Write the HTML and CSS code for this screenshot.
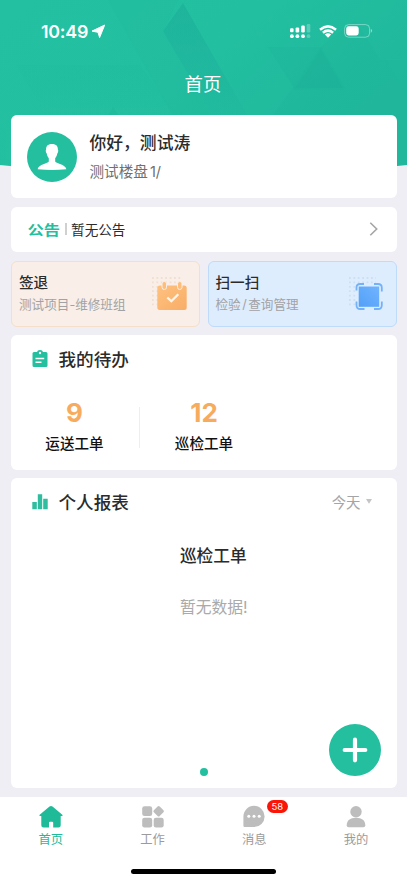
FILE: index.html
```html
<!DOCTYPE html>
<html lang="zh-CN">
<head>
<meta charset="utf-8">
<meta name="viewport" content="width=device-width, initial-scale=1">
<title>首页</title>
<link rel="stylesheet" href="styles.css">
</head>
<body>
<div class="app">
  <svg class="backdrop" viewBox="0 0 407 170" preserveAspectRatio="none" aria-hidden="true">
    <defs>
      <linearGradient id="bg" x1="0" y1="0" x2="1" y2="0.5"><stop offset="0" stop-color="#23c1a2"/><stop offset=".55" stop-color="#22bfa0"/><stop offset="1" stop-color="#20b79d"/></linearGradient>
      <linearGradient id="gem" x1="0" y1="0" x2="0" y2="1"><stop offset="0" stop-color="#1aa999" stop-opacity=".5"/><stop offset=".45" stop-color="#1aa999" stop-opacity=".36"/><stop offset="1" stop-color="#1aa999" stop-opacity=".05"/></linearGradient>
      <linearGradient id="fade" x1="0" y1="0" x2="0" y2="1"><stop offset="0" stop-color="#18a892" stop-opacity=".07"/><stop offset="1" stop-color="#18a892" stop-opacity="0"/></linearGradient>
      <clipPath id="curve"><path d="M0 0H407V165Q204 187 0 165Z"/></clipPath>
    </defs>
    <g clip-path="url(#curve)">
      <path fill="url(#bg)" d="M0 0H407V170H0Z"/>
      <path fill="#18a892" opacity=".08" d="M108 0H178L163 31L220 130H181Z"/>
      <path fill="url(#gem)" d="M183 3L250 120H215L163 31Z"/>
      <path fill="url(#fade)" d="M16 65H140L180 120H48Z"/>
      <path fill="#18a892" opacity=".14" d="M268 47H321L345 88H294Z"/>
      <path fill="#18a892" opacity=".12" d="M321 50L344 90H294Z"/>
      <path fill="#18a892" opacity=".07" d="M321 47L270 120H407V60H380L355 20Z"/>
      <path fill="#2cc9a9" opacity=".1" d="M321 59H386L407 97V59Z"/>
      <path fill="#18a892" opacity=".2" d="M108 116L113 107L119 116Z"/>
    </g>
  </svg>

  <header class="status">
    <div class="clock">10:49
      <svg width="15" height="15" viewBox="0 0 15 15"><path fill="#fff" stroke="#fff" stroke-linejoin="round" d="M13.7 1L8.6 13.6L7 8.3L1 7.1Z"/></svg>
    </div>
    <div class="signals">
      <svg width="21" height="15" viewBox="0 0 21 15"><g fill="#fff"><rect x="0" y="4.3" width="3.6" height="4" rx="1.2"/><rect x="5.6" y="3.4" width="3.6" height="5" rx="1.2"/><rect x="11.2" y="1.6" width="3.6" height="6.8" rx="1.2"/><circle cx="1.9" cy="12.2" r="1.9"/><circle cx="7.4" cy="12.2" r="1.9"/><circle cx="13" cy="12.2" r="1.9"/><g opacity=".25"><rect x="16.7" y="0" width="3.6" height="8.4" rx="1.2"/><circle cx="18.5" cy="12.2" r="1.9"/></g></g></svg>
      <svg width="18" height="13" viewBox="0 0 18 13"><g fill="none" stroke="#fff" stroke-width="2.5"><path d="M1 4.7Q9-2 17 4.7"/><path d="M3.9 7.8Q9 3.5 14.1 7.8"/></g><path fill="#fff" d="M5.8 9.6Q9 7.1 12.2 9.6L9 12.8Z"/></svg>
      <svg width="29" height="14" viewBox="0 0 29 14"><rect x=".6" y=".6" width="25" height="12.6" rx="4" fill="none" stroke="#fff" stroke-opacity=".4"/><rect x="2.2" y="2.3" width="12.5" height="9.2" rx="2.4" fill="#fff"/><path fill="#fff" opacity=".5" d="M26.8 4.8Q29.4 6.8 26.8 9Z"/></svg>
    </div>
  </header>
  <h1 class="title">首页</h1>

  <main class="content">
    <section class="card profile">
      <svg width="50" height="50" viewBox="0 0 50 50"><circle cx="25" cy="25" r="25" fill="#23bf9f"/><path fill="#fff" d="M25 12C29.4 12 31.1 14.4 30.9 17.8C31.6 18.2 31.2 20.5 30.4 21.2C30 24 28.7 25.4 28.2 26.3V29.5C28.7 31.5 38.5 32.2 39.4 37.2Q25 38.6 10.6 37.2C11.5 32.2 21.3 31.5 21.8 29.5V26.3C21.3 25.4 20 24 19.6 21.2C18.8 20.5 18.4 18.2 19.1 17.8C18.9 14.4 20.6 12 25 12Z"/></svg>
      <div>
        <h2 class="hello">你好，测试涛</h2>
        <p class="place">测试楼盘<span>1/</span></p>
      </div>
    </section>

    <section class="card notice">
      <strong>公告</strong><i></i><span>暂无公告</span>
      <svg width="9" height="14" viewBox="0 0 9 14"><path d="M1.3 .8L7.7 7L1.3 13.2" fill="none" stroke="#a5a5a5" stroke-width="1.6"/></svg>
    </section>

    <section class="actions">
      <div class="tile tile-out">
        <div><h3>签退</h3><p>测试项目-维修班组</p></div>
        <svg width="36" height="36" viewBox="0 0 36 36">
          <defs><linearGradient id="orange" x1="0" y1="0" x2="1" y2="1"><stop stop-color="#ffc17f"/><stop offset="1" stop-color="#f8ad68"/></linearGradient></defs>
          <path d="M1 2H30M1 6.4H30M1 10.8H8M1 15.2H8M1 19.6H8M1 24H8M1 28.4H8" stroke="#f0dfd3" stroke-width="1.8" stroke-dasharray="1.8 2.6"/>
          <rect x="6.3" y="9.5" width="29.4" height="24.6" rx="2.5" fill="url(#orange)"/>
          <g fill="#ffbd7b" stroke="#f9efe8" stroke-width="1"><rect x="11" y="5.5" width="4.5" height="8" rx="2.2"/><rect x="26.5" y="5.5" width="4.5" height="8" rx="2.2"/></g>
          <path d="M16.3 21.5L20.3 25.2L27.3 18.2" fill="none" stroke="#fff5eb" stroke-width="2.3"/>
        </svg>
      </div>
      <div class="tile tile-scan">
        <div><h3>扫一扫</h3><p>检验<b>/</b>查询管理</p></div>
        <svg width="36" height="36" viewBox="0 0 36 36">
          <defs><linearGradient id="blue" x1="0" y1="1" x2="1" y2="0"><stop stop-color="#54a0f7"/><stop offset="1" stop-color="#6fb4ff"/></linearGradient></defs>
          <path d="M1 2H28M1 6.4H28M1 10.8H8M1 15.2H8M1 19.6H8M1 24H8M1 28.4H8" stroke="#cddff2" stroke-width="1.8" stroke-dasharray="1.8 2.6"/>
          <rect x="10.7" y="10.5" width="20.5" height="20.3" fill="url(#blue)"/>
          <path d="M8.5 14.5V11.7Q8.5 8 12 8H16M26 8H30Q33.8 8 33.8 11.7V15.5M33.8 25.5V29.2Q33.8 33 30 33H26M16.5 33H12.3Q8.5 33 8.5 29.2V25.5" fill="none" stroke="#73b2f9" stroke-width="1.8"/>
        </svg>
      </div>
    </section>

    <section class="card todo">
      <h2 class="heading"><svg width="16" height="18" viewBox="0 0 16 18"><path fill="#23bf9f" d="M2 2H5Q5.3 0 8 0Q10.7 0 11 2H14Q15.5 2 15.5 3.5V15.5Q15.5 17 14 17H2Q.5 17 .5 15.5V3.5Q.5 2 2 2Z"/><circle cx="8" cy="3" r="1.2" fill="#fff"/><path d="M3.5 8.6H12.2M3.5 12.3H9.5" stroke="#fff" stroke-width="1.5"/></svg>我的待办</h2>
      <div class="stats">
        <div class="stat"><b>9</b><span>运送工单</span></div>
        <div class="stat"><b>12</b><span>巡检工单</span></div>
      </div>
    </section>

    <section class="card report">
      <h2 class="heading"><svg width="16" height="18" viewBox="0 0 16 18"><path fill="#2fbd9f" d="M.3 9H4.8V16.3H.3ZM5.8 1.2H10.2V16.3H5.8ZM11.2 5.8H15.7V16.3H11.2Z"/></svg>个人报表<span class="range">今天<svg width="6" height="5" viewBox="0 0 6 5"><path fill="#c4c4c4" d="M0 0H6L3 4.7Z"/></svg></span></h2>
      <h3 class="chart-title">巡检工单</h3>
      <p class="empty">暂无数据!</p>
      <div class="report-foot"><i class="dot"></i></div>
      <button class="add" aria-label="新增"><svg width="52" height="52" viewBox="0 0 52 52"><path d="M26 15.7V36.3M15.7 26H36.3" stroke="#fff" stroke-width="4.2" stroke-linecap="round"/></svg></button>
    </section>
  </main>

  <nav class="tabs">
    <a class="tab active"><svg width="24" height="24" viewBox="0 0 24 24"><path fill="#1fba98" d="M10.5 1.6Q12 .3 13.5 1.6L23 9.5Q24.4 11 22.5 11H21.7V20Q21.7 22.5 19.2 22.5H14.2V17.8Q14.2 16.8 13.2 16.8H11Q10 16.8 10 17.8V22.5H4.8Q2.3 22.5 2.3 20V11H1.5Q-.4 11 1 9.5Z"/></svg>首页</a>
    <a class="tab"><svg width="24" height="24" viewBox="0 0 24 24"><g fill="#bdbdbd"><rect x="1.2" y="1.3" width="10" height="9.8" rx="2.3"/><rect x="1.2" y="12.7" width="10" height="9.8" rx="2.3"/><rect x="12.7" y="12.7" width="10" height="9.8" rx="2.3"/><rect x="13.5" y="2.1" width="8.3" height="8.3" rx="1.5" transform="rotate(45 17.65 6.25)"/></g></svg>工作</a>
    <a class="tab"><svg width="24" height="24" viewBox="0 0 24 24"><path fill="#bdbdbd" d="M12 .8A10.6 10.6 0 0 1 12 22H2.6Q1.4 22 1.4 20.8V11.4A10.6 10.6 0 0 1 12 .8Z"/><g fill="#fff"><circle cx="6.8" cy="11.2" r="1.5"/><circle cx="12" cy="11.2" r="1.5"/><circle cx="17.2" cy="11.2" r="1.5"/></g></svg>消息<em class="badge">58</em></a>
    <a class="tab"><svg width="24" height="24" viewBox="0 0 24 24"><g fill="#bdbdbd"><circle cx="12" cy="6.7" r="5.7"/><path d="M2.7 20.3C2.7 15.5 6 12.7 12 12.7S21.3 15.5 21.3 20.3Q21.3 22.2 19.4 22.2H4.6Q2.7 22.2 2.7 20.3Z"/></g></svg>我的</a>
    <i class="home-bar"></i>
  </nav>
</div>
</body>
</html>
```
FILE: styles.css
```css
* { box-sizing: border-box; margin: 0; padding: 0; }
body { background: #efeef5; color: #2b2b2b; font-family: Inter, "Noto Sans CJK SC", sans-serif; }
svg { display: block; flex: none; }
h1, h2, h3 { font-weight: 500; }
.app { position: relative; display: flex; flex-direction: column; height: 883px; overflow: hidden; }
.backdrop { position: absolute; top: 0; left: 0; width: 100%; height: 170px; z-index: -1; }

.status { display: flex; justify-content: space-between; align-items: center; height: 62px; padding: 0 34px 0 41px; color: #fff; }
.clock { display: flex; align-items: center; gap: 3px; font-size: 17.8px; font-weight: 600; letter-spacing: -0.2px; }
.signals { display: flex; align-items: center; gap: 7.5px; }
.title { height: 53px; padding-right: 1px; line-height: 45px; text-align: center; color: #fff; font-size: 18.4px; font-weight: 400; }

.content { flex: 1; display: flex; flex-direction: column; gap: 8.5px; padding: 0 10.5px 8.5px 11px; }
.card { background: #fff; border-radius: 6px; }

.profile { height: 83px; display: flex; align-items: center; gap: 12.5px; padding: 0 16px; }
.hello { font-size: 16.8px; line-height: 24px; }
.place { margin-top: 6px; font-size: 14.6px; line-height: 22px; color: #707070; }
.place span { margin-left: 2px; }

.notice { height: 45.5px; display: flex; align-items: center; padding: 0 19px 0 16.5px; font-size: 13.6px; }
.notice strong { color: #23bf9f; font-size: 16.3px; font-weight: 700; transform: scaleY(.82); }
.notice i { width: 2px; height: 12px; margin: 0 4.5px; background: #d0d0d0; }
.notice svg { margin-left: auto; }

.actions { display: grid; grid-template-columns: 1fr 1fr; gap: 7.5px; }
.tile { height: 66px; display: flex; justify-content: space-between; padding: 10px 12px 0 7px; border: 1px solid; border-radius: 6px; }
.tile h3 { font-size: 14.6px; line-height: 22px; }
.tile p { margin-top: 1px; color: #a2a2a4; font-size: 12.6px; line-height: 20px; white-space: nowrap; }
.tile p b { margin: 0 1.5px; font-weight: 400; }
.tile svg { margin-top: 4.5px; }
.tile-out { background: #f9efe8; border-color: #f5dfc8; }
.tile-scan { background: #deedfe; border-color: #bedbfa; }

.heading { display: flex; align-items: center; gap: 11px; height: 47px; padding: 0 25px 0 20.5px; font-size: 17.6px; }
.todo { height: 134.5px; }
.stats { display: grid; grid-template-columns: 129px 129px; padding-top: 16px; margin-left: -1px; }
.stat { display: flex; flex-direction: column; align-items: center; }
.stat + .stat { background: linear-gradient(#eee, #eee) 0 9px / 1px 41px no-repeat; padding-left: 1px; }
.stat b { color: #f7ac5d; font-size: 26px; line-height: 30px; font-weight: 650; }
.stat span { margin-top: 5px; color: #111; font-size: 14.6px; line-height: 22px; font-weight: 500; }

.report { position: relative; flex: 1; display: flex; flex-direction: column; text-align: center; }
.range { display: flex; align-items: center; gap: 5px; margin-left: auto; color: #a5a5a5; font-size: 14.4px; font-weight: 400; }
.chart-title { margin: 18px 0 0 19px; font-size: 16.7px; line-height: 26px; }
.empty { margin: 26px 0 0 20px; color: #aaa; font-size: 15.8px; line-height: 26px; }
.report-foot { display: flex; justify-content: center; margin-top: auto; padding-bottom: 12.5px; }
.dot { width: 8px; height: 8px; border-radius: 50%; background: #23bf9f; }
.add { position: absolute; right: 15.5px; bottom: 12.5px; width: 52px; height: 52px; border: 0; border-radius: 50%; background: #23bf9f; }

.tabs { position: relative; display: grid; grid-template-columns: repeat(4, 1fr); height: 86.5px; background: #fff; }
.tab { position: relative; display: flex; flex-direction: column; align-items: center; padding-top: 8.4px; color: #9b9b9b; font-size: 12.3px; line-height: 21px; }
.active { color: #1fba98; }
.badge { position: absolute; left: 63.5px; top: 3px; width: 20.5px; height: 13.5px; border-radius: 7px; background: #fb1509; color: #fff; font-size: 9.5px; font-style: normal; line-height: 13.5px; text-align: center; }
.home-bar { position: absolute; left: 131px; bottom: 9px; width: 145px; height: 5px; border-radius: 3px; background: #000; }
```
